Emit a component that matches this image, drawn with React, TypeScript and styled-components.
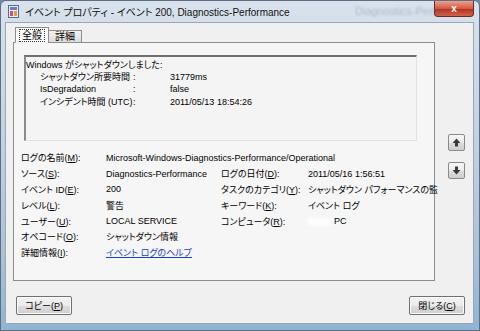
import React from "react";
import styled, { createGlobalStyle } from "styled-components";

const GlobalStyle = createGlobalStyle`
  html, body {
    margin: 0;
    padding: 0;
    background: #6f8aa6;
  }
  body {
    font-family: "Liberation Sans", "Noto Sans CJK JP", sans-serif;
    font-feature-settings: "palt";
    font-size: 9px;
    color: #000;
  }
`;

const Frame = styled.div`
  width: 480px;
  height: 331px;
  box-sizing: border-box;
  display: flex;
  flex-direction: column;
  padding: 0 5px 6px 4px;
  background: linear-gradient(180deg, #d9e2ec 0%, #c4d3e1 40%, #a9c0d6 80%, #8fb4d2 100%);
  border: 1px solid #5d6f84;
  border-radius: 6px 6px 0 0;
  overflow: hidden;
`;

const TitleBar = styled.div`
  height: 21px;
  display: flex;
  align-items: center;
  gap: 6px;
  padding: 0 0 0 3px;
  position: relative;
`;

const TitleText = styled.div`
  font-size: 10px;
  color: #111;
  flex: 1;
  white-space: nowrap;
`;

const GhostText = styled.div`
  position: absolute;
  left: 350px;
  top: 4px;
  font-size: 11px;
  color: rgba(90, 110, 140, 0.35);
  filter: blur(1.2px);
`;

const CloseBtn = styled.div`
  width: 38px;
  height: 15px;
  margin: -5px 0 0 0;
  border: 1px solid #6b2a22;
  border-top: none;
  border-radius: 0 0 4px 4px;
  background: linear-gradient(180deg, #e8a28f 0%, #d45a43 50%, #b8321d 55%, #d1634b 100%);
  display: flex;
  align-items: center;
  justify-content: center;
  color: #fff;
  font-weight: bold;
  font-size: 10px;
`;

const Client = styled.div`
  flex: 1;
  background: #f0f0f0;
  border: 1px solid #98a7b8;
  display: flex;
  flex-direction: column;
  padding: 3px 10px 0 7px;
`;

const Main = styled.div`
  display: flex;
  align-items: flex-start;
  gap: 13px;
`;

const TabArea = styled.div`
  width: 422px;
  display: flex;
  flex-direction: column;
`;

const TabRow = styled.div`
  display: flex;
  align-items: flex-end;
  padding-left: 2px;
  height: 17px;
  position: relative;
  z-index: 1;
  margin-bottom: -1px;
`;

const Tab = styled.div<{ $active?: boolean }>`
  font-size: 10px;
  height: ${(p) => (p.$active ? 16 : 13)}px;
  padding: 0 4px;
  border: 1px solid #8d8d8d;
  border-bottom: ${(p) => (p.$active ? "1px solid #f6f6f6" : "1px solid #8d8d8d")};
  background: ${(p) => (p.$active ? "#fbfbfb" : "linear-gradient(180deg, #f2f2f2, #dcdcdc)")};
  margin-left: ${(p) => (p.$active ? 0 : -1)}px;
  display: flex;
  align-items: center;
  box-sizing: border-box;
`;

const TabLabel = styled.span<{ $focus?: boolean }>`
  outline: ${(p) => (p.$focus ? "1px dotted #333" : "none")};
  padding: 0 2px;
  line-height: 11px;
`;

const Panel = styled.div`
  height: 239px;
  box-sizing: border-box;
  border: 1px solid #8d8d8d;
  background: #f6f6f6;
  padding: 12px 10px 0 10px;
  display: flex;
  flex-direction: column;
`;

const DescBox = styled.div`
  height: 86px;
  margin-right: 7px;
  box-sizing: border-box;
  border-top: 2px solid #707070;
  border-left: 2px solid #8a8a8a;
  border-right: 1px solid #e2e2e2;
  border-bottom: 1px solid #e2e2e2;
  background: #f4f4f4;
  padding: 2px 0;
  display: flex;
  flex-direction: column;
  white-space: nowrap;
`;

const DescHead = styled.div`
  line-height: 12px;
`;

const DescRow = styled.div`
  display: grid;
  grid-template-columns: 93px 37px auto;
  padding-left: 14px;
  line-height: 12.4px;
`;

const Fields = styled.div`
  margin-top: 9px;
  margin-left: -3px;
  display: grid;
  grid-template-columns: 85px 115px 87px auto;
  grid-auto-rows: 15.8px;
  align-items: center;
  white-space: nowrap;
`;

const Label = styled.div`
  color: #000;
`;

const Value = styled.div<{ $wide?: boolean }>`
  grid-column: ${(p) => (p.$wide ? "2 / 5" : "auto")};
`;

const Link = styled.span`
  color: #1a3ec8;
  text-decoration: underline;
`;

const Redacted = styled.span`
  display: inline-block;
  width: 24px;
  height: 8px;
  margin-right: 2px;
  background: #fdfdfd;
  filter: blur(1.5px);
  vertical-align: middle;
`;

const ArrowCol = styled.div`
  margin-top: 108px;
  display: flex;
  flex-direction: column;
  gap: 11px;
`;

const ArrowBtn = styled.div`
  width: 17px;
  height: 17px;
  box-sizing: border-box;
  border: 1px solid #8a8a8a;
  border-radius: 2px;
  background: linear-gradient(180deg, #f7f7f7 0%, #ececec 50%, #dcdcdc 51%, #cfcfcf 100%);
  display: flex;
  align-items: center;
  justify-content: center;
`;

const ButtonRow = styled.div`
  display: flex;
  justify-content: space-between;
  margin: 15px -2px 0 3px;
`;

const PushButton = styled.div`
  width: 56px;
  height: 19px;
  box-sizing: border-box;
  border: 1px solid #707070;
  border-radius: 2px;
  background: linear-gradient(180deg, #f2f2f2 0%, #ebebeb 50%, #dddddd 51%, #cfcfcf 100%);
  display: flex;
  align-items: center;
  justify-content: center;
  font-size: 9px;
  box-shadow: inset 0 0 0 1px #fbfbfb;
`;

const U = styled.span`
  text-decoration: underline;
`;

const AppIcon = () => (
  <svg width="11" height="13" viewBox="0 0 11 13">
    <rect x="0.5" y="0.5" width="10" height="12" fill="#e8eef8" stroke="#5a6a8a" />
    <rect x="2" y="2" width="7" height="3" fill="#6a7fc0" />
    <rect x="2" y="6" width="3" height="5" fill="#d04a8a" />
    <rect x="6" y="6" width="3" height="5" fill="#e0a030" />
  </svg>
);

const Arrow = ({ down }: { down?: boolean }) => (
  <svg width="9" height="9" viewBox="0 0 9 9">
    <path
      d={down ? "M3 0.5h3v3.5h2.5L4.5 8.5 0.5 4h2.5z" : "M4.5 0.5 8.5 5H6v3.5H3V5H0.5z"}
      fill="#3a3a3a"
    />
  </svg>
);

const fieldRows: [React.ReactNode, React.ReactNode, React.ReactNode?, React.ReactNode?][] = [
  [<>ログの名前(<U>M</U>):</>, <>Microsoft-Windows-Diagnostics-Performance/Operational</>],
  [
    <>ソース(<U>S</U>):</>,
    <>Diagnostics-Performance</>,
    <>ログの日付(<U>D</U>):</>,
    <>2011/05/16 1:56:51</>,
  ],
  [
    <>イベント ID(<U>E</U>):</>,
    <>200</>,
    <>タスクのカテゴリ(<U>Y</U>):</>,
    <>シャットダウン パフォーマンスの監</>,
  ],
  [<>レベル(<U>L</U>):</>, <>警告</>, <>キーワード(<U>K</U>):</>, <>イベント ログ</>],
  [
    <>ユーザー(<U>U</U>):</>,
    <>LOCAL SERVICE</>,
    <>コンピュータ(<U>R</U>):</>,
    <>
      <Redacted />
      PC
    </>,
  ],
  [<>オペコード(<U>O</U>):</>, <>シャットダウン情報</>],
  [<>詳細情報(<U>I</U>):</>, <Link>イベント ログのヘルプ</Link>],
];

export default function App() {
  return (
    <>
      <GlobalStyle />
      <Frame>
        <TitleBar>
          <AppIcon />
          <TitleText>イベント プロパティ - イベント 200, Diagnostics-Performance</TitleText>
          <GhostText>Diagnostics-Perfor</GhostText>
          <CloseBtn>x</CloseBtn>
        </TitleBar>
        <Client>
          <Main>
            <TabArea>
              <TabRow>
                <Tab $active>
                  <TabLabel $focus>全般</TabLabel>
                </Tab>
                <Tab>
                  <TabLabel>詳細</TabLabel>
                </Tab>
              </TabRow>
              <Panel>
                <DescBox>
                  <DescHead>Windows がシャットダウンしました:</DescHead>
                  <DescRow>
                    <span>シャットダウン所要時間</span>
                    <span>:</span>
                    <span>31779ms</span>
                  </DescRow>
                  <DescRow>
                    <span>IsDegradation</span>
                    <span>:</span>
                    <span>false</span>
                  </DescRow>
                  <DescRow>
                    <span>インシデント時間 (UTC)</span>
                    <span>:</span>
                    <span>2011/05/13 18:54:26</span>
                  </DescRow>
                </DescBox>
                <Fields>
                  {fieldRows.map(([l1, v1, l2, v2], i) => (
                    <React.Fragment key={i}>
                      <Label>{l1}</Label>
                      {l2 === undefined ? (
                        <Value $wide>{v1}</Value>
                      ) : (
                        <>
                          <Value>{v1}</Value>
                          <Label>{l2}</Label>
                          <Value>{v2}</Value>
                        </>
                      )}
                    </React.Fragment>
                  ))}
                </Fields>
              </Panel>
            </TabArea>
            <ArrowCol>
              <ArrowBtn>
                <Arrow />
              </ArrowBtn>
              <ArrowBtn>
                <Arrow down />
              </ArrowBtn>
            </ArrowCol>
          </Main>
          <ButtonRow>
            <PushButton>
              コピー(<U>P</U>)
            </PushButton>
            <PushButton>
              閉じる(<U>C</U>)
            </PushButton>
          </ButtonRow>
        </Client>
      </Frame>
    </>
  );
}
